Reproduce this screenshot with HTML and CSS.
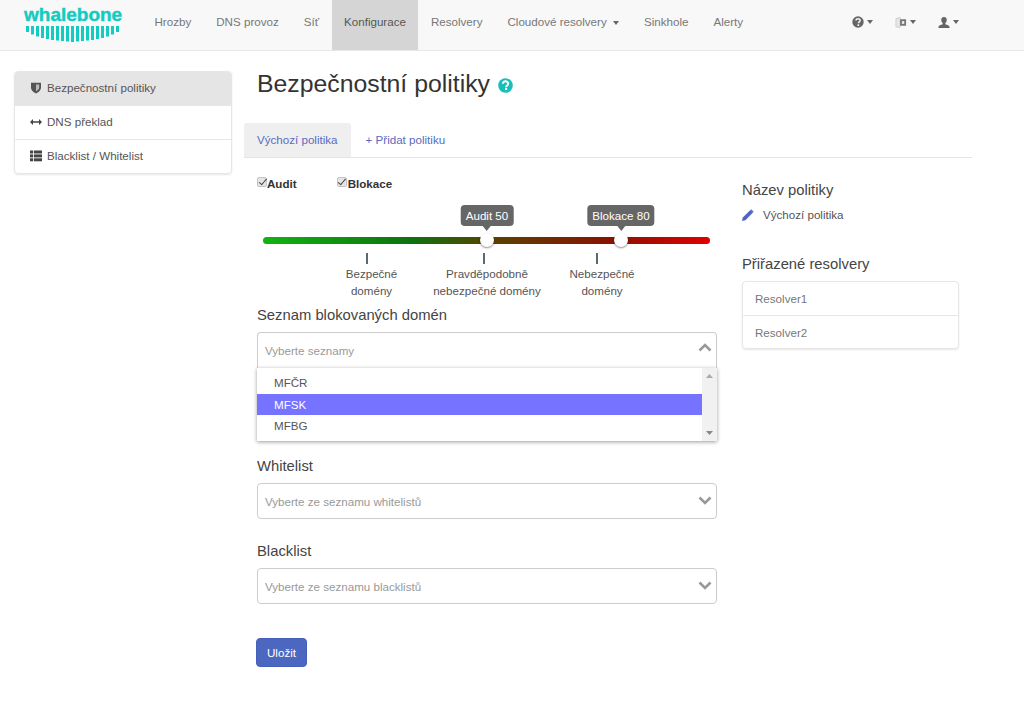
FILE: index.html
```html
<!DOCTYPE html>
<html lang="cs">
<head>
<meta charset="utf-8">
<title>Bezpečnostní politiky</title>
<link rel="stylesheet" href="styles.css">
</head>
<body>
<nav class="navbar">
  <a class="brand" href="#">
    <span class="brand-text">whalebone</span>
    <svg class="brand-mark" width="93" height="18" viewBox="0 0 93 18">
      <path stroke="#12cbc1" stroke-width="3" fill="none" d="M1.500 1v6M6.500 1v8.500M11.500 1v10.500M16.500 1v12M21.500 1v13M26.500 1v14M31.500 1v14.500M36.500 1v15M41.500 1v15.500M46.500 1v16M51.500 1v15.500M56.500 1v15M61.500 1v14.500M66.500 1v14M71.500 1v13M76.500 1v12M81.500 1v10.500M86.500 1v8.500M91.500 1v6"/>
    </svg>
  </a>
  <ul class="nav-main">
    <li><a href="#">Hrozby</a></li>
    <li><a href="#">DNS provoz</a></li>
    <li><a href="#">Síť</a></li>
    <li class="active"><a href="#">Konfigurace</a></li>
    <li><a href="#">Resolvery</a></li>
    <li><a href="#">Cloudové resolvery <span class="caret caret-wide"></span></a></li>
    <li><a href="#">Sinkhole</a></li>
    <li><a href="#">Alerty</a></li>
  </ul>
  <ul class="nav-icons">
    <li><svg width="12" height="12" viewBox="0 0 12 12"><circle cx="6" cy="6" r="5.700" fill="#666"/><path d="M4 4.600c0-2.500 4.100-2.500 4.100-.1 0 1.500-1.700 1.400-1.700 2.800" fill="none" stroke="#f8f8f8" stroke-width="1.500"/><rect x="5.500" y="8.300" width="1.700" height="1.700" fill="#f8f8f8"/></svg><span class="caret"></span></li>
    <li><svg width="13" height="13" viewBox="0 0 13 13"><path d="M1 2.500l4.500-1.500v11l-4.500-1z" fill="#e8e8e8" stroke="#bbb" stroke-width=".7"/><path d="M5.500 3h6.500v7H5.500z" fill="#777"/><path d="M7.500 5h2.500v3H7.500z" fill="#eee"/></svg><span class="caret"></span></li>
    <li><svg width="13" height="13" viewBox="0 0 13 13"><path d="M6.500.5c2 0 3 1.400 3 3.300 0 1.400-.7 2.700-1.500 3.300v1.400c1.800.7 4.500 1.200 4.500 2.800v1.200H.5v-1.200c0-1.600 2.700-2.100 4.500-2.800V7.100C4.200 6.500 3.500 5.200 3.500 3.800c0-1.900 1-3.300 3-3.300z" fill="#666"/></svg><span class="caret"></span></li>
  </ul>
</nav>

<div class="layout">
  <aside class="side-menu">
    <a class="side-item current" href="#">
      <svg class="side-icon" width="12" height="12" viewBox="0 0 12 12"><path d="M1 .8h10v4.700c0 3-2.800 5-5 6-2.200-1-5-3-5-6z" fill="#555"/><path d="M6 2.500h3.200v3c0 1.800-1.700 3-3.200 3.700z" fill="#bbb"/></svg>
      Bezpečnostní politiky
    </a>
    <a class="side-item" href="#">
      <svg class="side-icon" width="12" height="12" viewBox="0 0 12 12"><path d="M2.500 6h7" stroke="#444" stroke-width="1.400"/><path d="M0 6l3-3v6zM12 6L9 3v6z" fill="#444"/></svg>
      DNS překlad
    </a>
    <a class="side-item" href="#">
      <svg class="side-icon" width="12" height="12" viewBox="0 0 12 12"><g fill="#444"><rect y=".5" width="3" height="3"/><rect x="3.800" y=".5" width="8.200" height="3"/><rect y="4.400" width="3" height="3"/><rect x="3.800" y="4.400" width="8.200" height="3"/><rect y="8.300" width="3" height="3"/><rect x="3.800" y="8.300" width="8.200" height="3"/></g></svg>
      Blacklist / Whitelist
    </a>
  </aside>

  <main class="content">
    <h1 class="page-title">Bezpečnostní politiky
      <svg class="help" width="15" height="15" viewBox="0 0 15 15"><circle cx="7.500" cy="7.500" r="7.300" fill="#14c0b8"/><path d="M4.900 5.800c0-3.300 5.300-3.300 5.300-.1 0 2-2.100 1.800-2.100 3.500" fill="none" stroke="#fff" stroke-width="1.900"/><rect x="7" y="10" width="2.100" height="2.100" fill="#fff"/></svg>
    </h1>
    <div class="tabs">
      <a class="tab active" href="#">Výchozí politika</a>
      <a class="tab" href="#">+ Přidat politiku</a>
    </div>
    <div class="panel">
      <form class="form-col">
        <div class="checks">
          <label class="check"><input type="checkbox" checked>Audit</label>
          <label class="check"><input type="checkbox" checked>Blokace</label>
        </div>
        <div class="slider">
          <div class="track"></div>
          <div class="thumb thumb-audit"><span class="tip">Audit 50</span></div>
          <div class="thumb thumb-block"><span class="tip">Blokace 80</span></div>
        </div>
        <div class="legend">
          <div class="legend-item legend-safe"><i></i>Bezpečné<br>domény</div>
          <div class="legend-item legend-prob"><i></i>Pravděpodobně<br>nebezpečné domény</div>
          <div class="legend-item legend-bad"><i></i>Nebezpečné<br>domény</div>
        </div>

        <h4 class="field-label first">Seznam blokovaných domén</h4>
        <div class="select open">
          <span>Vyberte seznamy</span>
          <svg class="chev" width="14" height="9" viewBox="0 0 14 9"><path d="M1.500 7.500L7 2l5.500 5.500" fill="none" stroke="#999" stroke-width="2.600"/></svg>
        </div>
        <div class="menu">
          <ul class="menu-list">
            <li>MFČR</li>
            <li class="hover">MFSK</li>
            <li>MFBG</li>
          </ul>
          <div class="scrollbar">
            <svg width="7" height="4" viewBox="0 0 7 4"><path d="M3.500 0L7 4H0z" fill="#aaa"/></svg>
            <svg width="7" height="4" viewBox="0 0 7 4"><path d="M3.500 4L7 0H0z" fill="#888"/></svg>
          </div>
        </div>

        <h4 class="field-label">Whitelist</h4>
        <div class="select">
          <span>Vyberte ze seznamu whitelistů</span>
          <svg class="chev" width="14" height="9" viewBox="0 0 14 9"><path d="M1.500 1.500L7 7l5.500-5.500" fill="none" stroke="#999" stroke-width="2.600"/></svg>
        </div>

        <h4 class="field-label">Blacklist</h4>
        <div class="select">
          <span>Vyberte ze seznamu blacklistů</span>
          <svg class="chev" width="14" height="9" viewBox="0 0 14 9"><path d="M1.500 1.500L7 7l5.500-5.500" fill="none" stroke="#999" stroke-width="2.600"/></svg>
        </div>

        <button class="save" type="button">Uložit</button>
      </form>

      <section class="info-col">
        <h4 class="info-title">Název politiky</h4>
        <div class="policy-name">
          <svg width="12" height="12" viewBox="0 0 12 12"><path d="M0 12l.8-3.400L8.400 1l2.600 2.600-7.600 7.600z" fill="#4f63c4"/><path d="M9.200.3l2.500 2.500-.7.700L8.500 1z" fill="#4f63c4"/></svg>
          <span>Výchozí politika</span>
        </div>
        <h4 class="info-title resolvers">Přiřazené resolvery</h4>
        <ul class="resolver-list">
          <li>Resolver1</li>
          <li>Resolver2</li>
        </ul>
      </section>
    </div>
  </main>
</div>
</body>
</html>
```

FILE: styles.css
```css
* { box-sizing: border-box; }
html, body { margin: 0; padding: 0; }
body {
  font-family: "Liberation Sans", Arial, sans-serif;
  font-size: 11.600px;
  line-height: 17px;
  color: #444;
  background: #fff;
  height: 702px;
  overflow: hidden;
}
a { text-decoration: none; color: inherit; }
ul { list-style: none; margin: 0; padding: 0; }

/* navbar */
.navbar {
  display: flex;
  height: 51px;
  background: #f8f8f8;
  border-bottom: 1px solid #e7e7e7;
}
.brand {
  width: 142px;
  padding: 4px 0 0 24px;
  display: flex;
  flex-direction: column;
}
.brand-text {
  font-family: "Liberation Sans", sans-serif;
  font-weight: 700;
  font-size: 19px;
  line-height: 22px;
  color: #12cbc1;
  -webkit-text-stroke: .4px #12cbc1;
}
.brand-mark { margin: -1px 0 0 2px; display: block; }
.nav-main { display: flex; }
.nav-main a {
  display: block;
  height: 50px;
  padding: 0 12.500px;
  line-height: 44px;
  color: #777;
}
.nav-main .active a { background: #d5d5d5; color: #555; }
.caret {
  display: inline-block;
  width: 0;
  height: 0;
  margin-left: 2px;
  vertical-align: middle;
  border-top: 4px solid #666;
  border-left: 3px solid transparent;
  border-right: 3px solid transparent;
}
.caret-wide { margin-left: 3px; }
.nav-icons {
  display: flex;
  margin-left: 96px;
  gap: 22px;
  padding-top: 15px;
}
.nav-icons li { display: flex; align-items: center; height: 14px; gap: 1px; width: 21px; }

/* layout */
.layout {
  display: flex;
  padding: 20px 52px 0 14px;
  gap: 12px;
}
.side-menu {
  width: 218px;
  height: 103px;
  flex: none;
  border: 1px solid #e6e6e6;
  border-radius: 4px;
  box-shadow: 0 1px 2px rgba(0,0,0,.1);
  overflow: hidden;
}
.side-item {
  display: flex;
  align-items: center;
  height: 34px;
  padding: 0 0 2px 15px;
  color: #555;
  border-bottom: 1px solid #e6e6e6;
  gap: 5px;
}
.side-item:last-child { border-bottom: 0; height: 33px; }
.side-item.current { background: #e5e5e5; }
.side-icon { flex: none; }

.content { flex: 1; min-width: 0; }
.page-title {
  margin: 0 0 0 13px;
  font-weight: 400;
  font-size: 24.800px;
  line-height: 26px;
  color: #333;
  height: 52px;
}
.help { vertical-align: -1px; margin-left: 1px; }

.tabs {
  display: flex;
  height: 35px;
  border-bottom: 1px solid #e4e4e4;
}
.tab {
  padding: 0 13px;
  margin-right: 2px;
  line-height: 34px;
  color: #5a6bc0;
  height: 34px;
}
.tab.active {
  background: #efefef;
  border-radius: 3px 3px 0 0;
}

.panel {
  display: flex;
  padding-left: 13px;
}
.form-col { width: 460px; flex: none; }
.info-col { margin-left: 25px; width: 217px; padding-top: 23px; }

.checks {
  display: flex;
  height: 17px;
  margin-top: 17px;
  gap: 40px;
}
.check {
  display: flex;
  align-items: center;
  font-weight: 700;
  color: #333;
}
.check input {
  appearance: none;
  position: relative;
  width: 10px;
  height: 10px;
  margin: 0 0 4px 0;
  background: #e6e6e6;
  border: 1px solid #c4c4c4;
  border-radius: 2px;
}
.check + .check input { margin-right: 1px; }
.check input::after {
  content: "";
  position: absolute;
  left: 2.500px;
  top: -.5px;
  width: 3px;
  height: 6.500px;
  border: solid #444;
  border-width: 0 1.500px 1.500px 0;
  transform: rotate(40deg);
}

.slider {
  position: relative;
  height: 42px;
  margin: 10px 7px 0 6px;
}
.track {
  position: absolute;
  left: 0;
  right: 0;
  height: 7px;
  top: 35px;
  border-radius: 4px;
  background: linear-gradient(to right, #12b312 0%, #0e720e 33%, #5c4000 52%, #8a1200 78%, #e00000 100%);
}
.thumb {
  position: absolute;
  top: 31px;
  width: 14px;
  height: 14px;
  margin-left: -7px;
  border-radius: 50%;
  background: #fff;
  box-shadow: 0 1px 2px rgba(0,0,0,.45);
}
.thumb-audit { left: 224px; }
.thumb-block { left: 358px; }
.tip {
  position: absolute;
  bottom: 21px;
  left: 50%;
  transform: translateX(-50%);
  white-space: nowrap;
  padding: 0 5px;
  height: 21px;
  line-height: 21px;
  color: #fff;
  background: #666;
  border-radius: 4px;
}
.tip::after {
  content: "";
  position: absolute;
  left: 50%;
  top: 100%;
  margin-left: -4px;
  border-top: 5px solid #666;
  border-left: 4px solid transparent;
  border-right: 4px solid transparent;
}

.legend {
  display: flex;
  height: 53px;
  margin-top: 9px;
  text-align: center;
  line-height: 17px;
  color: #555;
}
.legend-item i {
  display: block;
  width: 2px;
  height: 11px;
  background: #5a6a70;
  margin-bottom: 1px;
}
.legend-safe { margin-left: 84.500px; width: 60px; }
.legend-safe i { margin-left: calc(50% - 6px); }
.legend-prob { margin-left: 25.500px; width: 120px; }
.legend-prob i { margin-left: calc(50% - 4px); }
.legend-bad { margin-left: 20px; width: 70px; }
.legend-bad i { margin-left: calc(50% - 6px); }

.field-label {
  margin: 23px 0 8px;
  font-weight: 400;
  font-size: 14.800px;
  line-height: 18px;
  color: #444;
}
.field-label.first { margin-top: 0; }

.select {
  display: flex;
  align-items: center;
  justify-content: space-between;
  height: 36px;
  padding: 0 4px 0 7px;
  border: 1px solid #ccc;
  border-radius: 4px;
  color: #999;
}
.select.open {
  border-bottom: 0;
  border-radius: 4px 4px 0 0;
}
.chev { flex: none; margin-top: -1px; }
.select.open .chev { margin-top: -6px; }

.menu {
  display: flex;
  height: 73px;
  background: #fff;
  box-shadow: 0 1px 4px rgba(0,0,0,.4);
  margin-bottom: -7px;
}
.menu-list { flex: 1; padding-top: 4px; }
.menu-list li {
  height: 21.500px;
  line-height: 21px;
  padding-left: 17px;
  color: #555;
}
.menu-list .hover { background: #7573ff; color: #fff; }
.scrollbar {
  width: 15px;
  flex: none;
  background: #f1f1f1;
  display: flex;
  flex-direction: column;
  align-items: center;
  justify-content: space-between;
  padding: 6px 0;
}

.save {
  display: block;
  margin: 34px 0 0 -1px;
  width: 51px;
  height: 29px;
  padding: 0;
  font: inherit;
  color: #fff;
  background: #4c67bf;
  border: 1px solid #4460b8;
  border-radius: 4px;
}

.info-title {
  margin: 0;
  font-weight: 400;
  font-size: 14.800px;
  line-height: 18px;
  color: #444;
}
.info-title.resolvers { margin-top: 32px; }
.policy-name {
  display: flex;
  align-items: center;
  gap: 9px;
  margin-top: 7px;
  color: #555;
}
.resolver-list {
  margin-top: 8px;
  border: 1px solid #e6e6e6;
  border-radius: 4px;
  box-shadow: 0 1px 2px rgba(0,0,0,.1);
}
.resolver-list li {
  height: 34px;
  line-height: 33px;
  padding-left: 12px;
  color: #777;
  border-bottom: 1px solid #e6e6e6;
}
.resolver-list li:last-child { border-bottom: 0; height: 32px; }
```
